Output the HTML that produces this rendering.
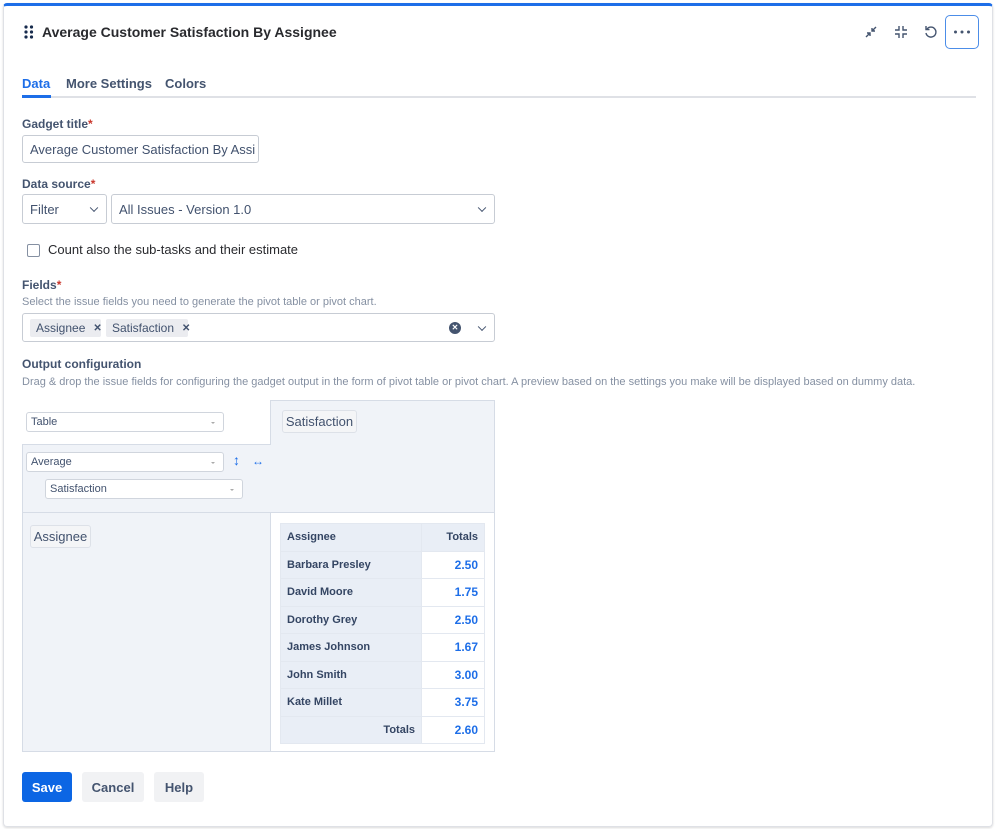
<!DOCTYPE html>
<html><head><meta charset="utf-8"><style>
*{box-sizing:border-box;margin:0;padding:0}
body{width:999px;height:829px;background:#fff;font-family:"Liberation Sans",sans-serif;color:#172b4d;position:relative;overflow:hidden}
.a{position:absolute}
.card{left:3px;top:3px;width:990px;height:824px;border:1px solid #dfe1e6;border-top:3px solid #1d6ee8;border-radius:4px;box-shadow:0 1px 2px rgba(0,0,0,.15)}
.lbl{font-size:12px;font-weight:bold;color:#44546f}
.lbl b{color:#c9372c;font-weight:bold}
.inp{border:1px solid #c7ccd4;border-radius:3px;background:#fff;font-size:13px;color:#42526e;display:flex;align-items:center;padding-left:7px}
.chev{position:absolute;right:9px;top:50%;width:6px;height:6px;border-right:1.6px solid #42526e;border-bottom:1.6px solid #42526e;transform:translateY(-70%) rotate(45deg)}
.sm{border:1px solid #d0d5dd;border-radius:3px;background:#fff;font-size:11px;color:#42526e;display:flex;align-items:center;padding-left:4px}
.sm:after{content:"";position:absolute;right:8px;top:9px;border:2px solid transparent;border-top:2.5px solid #aaa}
.chip{border:1px solid #dde1e8;border-radius:3px;background:#f4f5f7;font-size:13px;color:#42526e;display:flex;align-items:center;justify-content:center}
.tag{background:#ebecf0;border-radius:2px;font-size:12px;color:#42526e;display:flex;align-items:center;padding-left:6px;height:18px}
.tag i{font-style:normal;font-weight:bold;font-size:10px;margin-left:8px}
table{border-collapse:collapse;font-size:11px;font-weight:bold;color:#344563}
td{height:27.5px;border:1px solid #e3e8f0;padding:0 6px}
td.n{background:#e9eef6;width:141px}
td.v{background:#fff;width:63px;text-align:right;color:#1d6ee8;font-size:12px}
.btn{height:30px;border-radius:3px;font-size:13px;font-weight:bold;display:flex;align-items:center;justify-content:center;background:#f1f2f4;color:#44546f}
</style></head><body>
<div class="a card"></div>
<svg class="a" style="left:24px;top:25px" width="10" height="14"><g fill="#172b4d"><circle cx="2" cy="2" r="1.6"/><circle cx="7.5" cy="2" r="1.6"/><circle cx="2" cy="7" r="1.6"/><circle cx="7.5" cy="7" r="1.6"/><circle cx="2" cy="12" r="1.6"/><circle cx="7.5" cy="12" r="1.6"/></g></svg>
<div class="a" style="left:42px;top:24px;font-size:14px;font-weight:bold;color:#292a2e">Average Customer Satisfaction By Assignee</div>
<svg class="a" style="left:864px;top:25px" width="14" height="14" fill="none" stroke="#44546f" stroke-width="1.4"><path d="M2 12L6 8M3 8h3v3M12 2L8 6M8 3v3h3"/></svg>
<svg class="a" style="left:894px;top:25px" width="14" height="14" fill="none" stroke="#44546f" stroke-width="1.4"><path d="M5 1v4H1M9 1v4h4M5 13V9H1M9 13V9h4"/></svg>
<svg class="a" style="left:924px;top:25px" width="14" height="14" fill="none" stroke="#44546f" stroke-width="1.4"><path d="M3 4A5 5 0 1 1 2 8"/><path d="M2 1v3.5h3.5"/></svg>
<div class="a" style="left:945px;top:15px;width:34px;height:34px;border:1.5px solid #4c8de8;border-radius:5px"></div>
<svg class="a" style="left:953px;top:30px" width="18" height="4" fill="#44546f"><circle cx="2.5" cy="2" r="1.5"/><circle cx="9" cy="2" r="1.5"/><circle cx="15.5" cy="2" r="1.5"/></svg>
<div class="a" style="left:22px;top:76px;font-size:13px;font-weight:bold;color:#1d6ee8">Data</div>
<div class="a" style="left:66px;top:76px;font-size:13px;font-weight:bold;color:#44546f">More Settings</div>
<div class="a" style="left:165px;top:76px;font-size:13px;font-weight:bold;color:#44546f">Colors</div>
<div class="a" style="left:22px;top:96px;width:954px;height:2px;background:#dfe1e6"></div>
<div class="a" style="left:22px;top:95px;width:29px;height:3px;background:#1d6ee8"></div>
<div class="a lbl" style="left:22px;top:117px">Gadget title<b>*</b></div>
<div class="a inp" style="left:22px;top:135px;width:237px;height:28px;white-space:nowrap;overflow:hidden">Average Customer Satisfaction By Assi</div>
<div class="a lbl" style="left:22px;top:177px">Data source<b>*</b></div>
<div class="a inp" style="left:22px;top:194px;width:85px;height:30px">Filter<span class="chev"></span></div>
<div class="a inp" style="left:111px;top:194px;width:384px;height:30px">All Issues - Version 1.0<span class="chev"></span></div>
<div class="a" style="left:27px;top:244px;width:13px;height:13px;border:1.5px solid #8590a2;border-radius:2px"></div>
<div class="a" style="left:48px;top:242px;font-size:13px;color:#292a2e">Count also the sub-tasks and their estimate</div>
<div class="a lbl" style="left:22px;top:278px">Fields<b>*</b></div>
<div class="a" style="left:22px;top:296px;font-size:11px;color:#8590a2">Select the issue fields you need to generate the pivot table or pivot chart.</div>
<div class="a inp" style="left:22px;top:313px;width:473px;height:29px"><span class="chev"></span></div>
<div class="a tag" style="left:30px;top:319px;width:71px">Assignee<i>✕</i></div>
<div class="a tag" style="left:106px;top:319px;width:82px">Satisfaction<i>✕</i></div>
<div class="a" style="left:449px;top:322px;width:12px;height:12px;border-radius:50%;background:#44546f;color:#fff;font-size:8px;font-weight:bold;text-align:center;line-height:12px">✕</div>
<div class="a lbl" style="left:22px;top:357px">Output configuration</div>
<div class="a" style="left:22px;top:376px;font-size:11px;color:#8590a2">Drag &amp; drop the issue fields for configuring the gadget output in the form of pivot table or pivot chart. A preview based on the settings you make will be displayed based on dummy data.</div>
<div class="a" style="left:270px;top:400px;width:225px;height:113px;background:#f0f3f8;border:1px solid #d6dce6"></div>
<div class="a" style="left:22px;top:444px;width:249px;height:69px;background:#f0f3f8;border:1px solid #d6dce6;border-right:none"></div>
<div class="a" style="left:22px;top:512px;width:249px;height:240px;background:#f0f3f8;border:1px solid #d6dce6"></div>
<div class="a" style="left:270px;top:512px;width:225px;height:240px;background:#fff;border:1px solid #d6dce6"></div>
<div class="a sm" style="left:26px;top:412px;width:198px;height:20px">Table</div>
<div class="a chip" style="left:282px;top:410px;width:75px;height:23px">Satisfaction</div>
<div class="a sm" style="left:26px;top:452px;width:198px;height:20px">Average</div>
<div class="a" style="left:233px;top:452px;font-size:14px;color:#1d6ee8">↕</div>
<div class="a" style="left:252px;top:454px;font-size:12px;color:#1d6ee8">↔</div>
<div class="a sm" style="left:45px;top:479px;width:198px;height:20px">Satisfaction</div>
<div class="a chip" style="left:30px;top:525px;width:61px;height:23px">Assignee</div>
<table class="a" style="left:280px;top:523px">
<tr><td class="n" style="height:27px">Assignee</td><td class="n" style="width:63px;text-align:right;font-size:11px">Totals</td></tr>
<tr><td class="n">Barbara Presley</td><td class="v">2.50</td></tr>
<tr><td class="n">David Moore</td><td class="v">1.75</td></tr>
<tr><td class="n">Dorothy Grey</td><td class="v">2.50</td></tr>
<tr><td class="n">James Johnson</td><td class="v">1.67</td></tr>
<tr><td class="n">John Smith</td><td class="v">3.00</td></tr>
<tr><td class="n">Kate Millet</td><td class="v">3.75</td></tr>
<tr><td class="n" style="text-align:right">Totals</td><td class="v">2.60</td></tr>
</table>
<div class="a btn" style="left:22px;top:772px;width:50px;background:#0c66e4;color:#fff">Save</div>
<div class="a btn" style="left:82px;top:772px;width:62px">Cancel</div>
<div class="a btn" style="left:154px;top:772px;width:50px">Help</div>
</body></html>
